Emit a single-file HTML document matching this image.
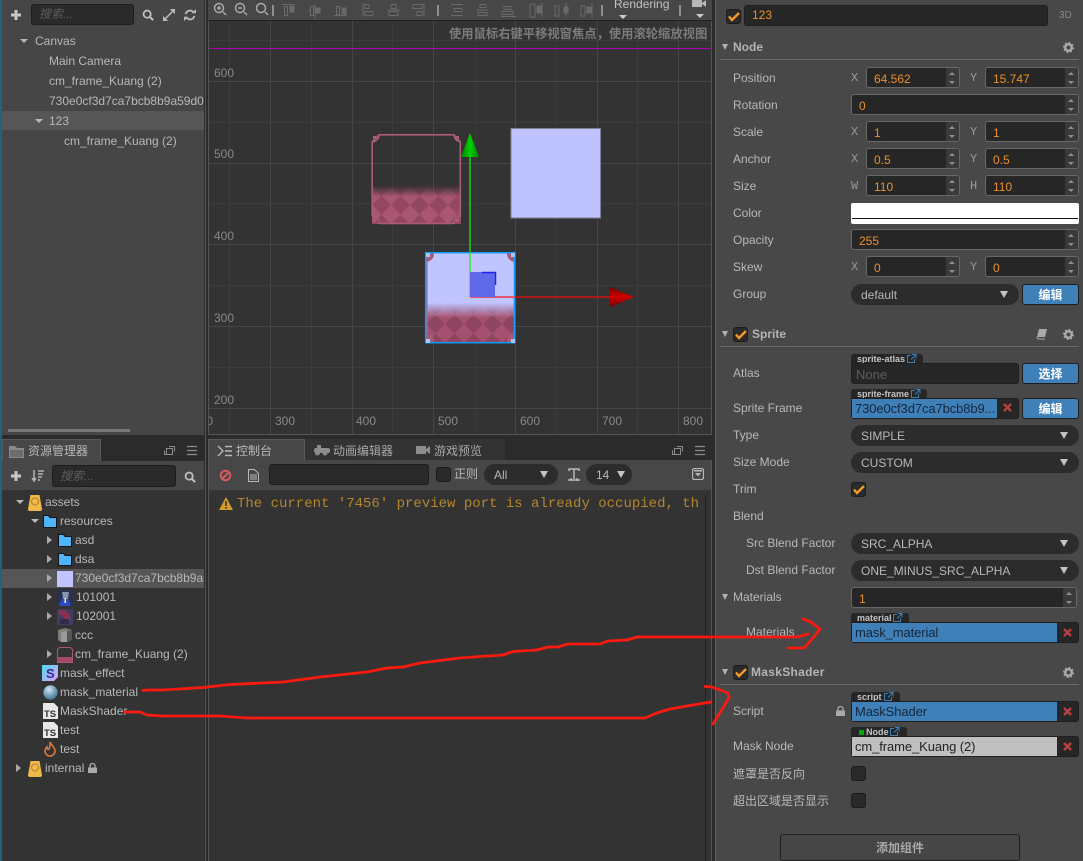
<!DOCTYPE html>
<html><head><meta charset="utf-8"><style>
html,body{margin:0;padding:0;background:#2b2b2b}
#r{position:relative;width:1083px;height:861px;overflow:hidden;background:#2b2b2b;font:12px/14px "Liberation Sans","Noto Sans CJK SC",sans-serif;color:#b8b8b8}
#r div,#r span.a,#r svg{position:absolute}
.t{position:absolute;white-space:nowrap}
.b{position:absolute}
.x{font:12px/14px "Liberation Mono",monospace;color:#999}
.n{background:#262626;border:1px solid #686868;border-radius:3px;height:19px;box-sizing:content-box;color:#e8902c;font-size:12px;line-height:23px;text-indent:7px}
.n i{position:absolute;right:0;top:0;bottom:0;width:13px;background:#3a3a3a;border-radius:0 2px 2px 0}
.n i:before,.n i:after{content:"";position:absolute;left:3px;border-left:3.5px solid transparent;border-right:3.5px solid transparent}
.n i:before{top:4px;border-bottom:3px solid #8f8f8f}
.n i:after{bottom:3px;border-top:3px solid #8f8f8f}
.s{background:#2c2c2c;border-radius:11px;height:21px;line-height:22px;text-indent:10px;color:#b8b8b8}
.s i{position:absolute;right:11px;top:7px;border-left:4px solid transparent;border-right:4px solid transparent;border-top:7px solid #c4c4c4}
.btn{background:#3f80b9;border:1px solid #1e1e1e;border-radius:3px;color:#fff;font-weight:bold;text-align:center;line-height:20px;height:19px;width:55px;left:1022px}
.o{background:#262626;border:1px solid #1f1f1f;border-radius:3px;height:19px;line-height:21px;text-indent:4px;box-sizing:content-box}
.tag{background:#262626;border-radius:3px 3px 0 0;height:10px;font:bold 9px/10px "Liberation Sans",sans-serif;color:#c4c4c4;text-indent:6px}
.cb{width:13px;height:13px;background:#2a2a2a;border:1px solid #1c1c1c;border-radius:3px}
.h{font-weight:bold;color:#b4b4b4}
.sep{height:1px;background:#6a6a6a;left:720px;width:359px}
.tri{width:0;height:0;border-left:3.5px solid transparent;border-right:3.5px solid transparent;border-top:6px solid #b0b0b0}
.tt{width:0;height:0;border-left:4px solid transparent;border-right:4px solid transparent;border-top:4px solid #b8b8b8}
.rt{width:0;height:0;border-top:4px solid transparent;border-bottom:4px solid transparent;border-left:5px solid #aaa}
.lb{font-size:12px;color:#888}
.bl{background:#3f80b9;color:#16263a;font-size:13px;height:19px;line-height:20px;text-indent:3px;letter-spacing:-.1px;white-space:nowrap;overflow:hidden}
</style></head><body><div id="r">

<!-- panels -->
<div style="left:0;top:0;width:2px;height:861px;background:#25607f"></div>
<div style="left:2px;top:0;width:202px;height:435px;background:#464646"></div>
<div style="left:2px;top:111px;width:202px;height:19px;background:#565656"></div>
<div style="left:8px;top:429px;width:122px;height:3px;background:#777"></div>
<div style="left:205px;top:0;width:1px;height:861px;background:#555"></div>
<div style="left:208px;top:0;width:504px;height:20px;background:#474747"></div>
<div style="left:209px;top:20px;width:503px;height:1px;background:#222"></div>

<!-- tree -->
<svg style="left:11px;top:10px" width="10" height="10"><path d="M3.500 0h3v3.500H10v3H6.500V10h-3V6.500H0v-3h3.500z" fill="#c8c8c8"/></svg>
<div class="b" style="left:31px;top:4px;width:101px;height:19px;background:#2a2a2a;border:1px solid #1e1e1e;border-radius:3px"></div>
<div class="t" style="left:39px;top:7px;color:#5c5c5c;font-style:italic">搜索...</div>
<svg style="left:142px;top:9px" width="12" height="12" viewBox="0 0 14 14"><circle cx="6" cy="6" r="4.200" fill="none" stroke="#c0c0c0" stroke-width="2"/><path d="M9 9l4 4" stroke="#c0c0c0" stroke-width="2.400"/></svg>
<svg style="left:163px;top:9px" width="12" height="12" viewBox="0 0 14 14"><path d="M2 12l10-10" stroke="#b8b8b8" stroke-width="1.800"/><path d="M8 0h6v6zM0 8v6h6z" fill="#b8b8b8"/></svg>
<svg style="left:184px;top:9px" width="12" height="12" viewBox="0 0 14 14"><path d="M2 6a5 5 0 0 1 9-2M12 8a5 5 0 0 1-9 2" fill="none" stroke="#b8b8b8" stroke-width="2.200"/><path d="M9 5h5V0zM5 9H0v5z" fill="#b8b8b8"/></svg>
<div class="b tt" style="left:20px;top:39px"></div>
<div class="t" style="left:35px;top:34px">Canvas</div>
<div class="t" style="left:49px;top:54px">Main Camera</div>
<div class="t" style="left:49px;top:74px">cm_frame_Kuang (2)</div>
<div class="t" style="left:49px;top:94px;width:155px;overflow:hidden">730e0cf3d7ca7bcb8b9a59d0</div>
<div class="b tt" style="left:35px;top:119px"></div>
<div class="t" style="left:49px;top:114px">123</div>
<div class="t" style="left:64px;top:134px">cm_frame_Kuang (2)</div>

<!-- scene -->
<svg style="left:0;top:0" width="1083" height="861">
<defs>
<pattern id="p" width="19" height="19" patternUnits="userSpaceOnUse" x="372" y="186">
<rect width="19" height="19" fill="#a04d6a"/><path d="M0 0L9.500 9.500 19 0zM0 19L9.500 9.500 19 19z" fill="#934762"/><path d="M0 0L9.500 9.500 0 19zM19 0L9.500 9.500 19 19z" fill="#aa5572"/>
</pattern>
<pattern id="p2" width="19" height="19" patternUnits="userSpaceOnUse" x="426" y="305">
<rect width="19" height="19" fill="#9c4a66"/><path d="M0 0L9.500 9.500 19 0zM0 19L9.500 9.500 19 19z" fill="#8f4460"/><path d="M0 0L9.500 9.500 0 19zM19 0L9.500 9.500 19 19z" fill="#a5506e"/>
</pattern>
<linearGradient id="g1" x1="0" y1="0" x2="0" y2="1"><stop offset="0" stop-color="#fff" stop-opacity="0"/><stop offset=".3" stop-color="#fff" stop-opacity="1"/><stop offset="1" stop-color="#fff"/></linearGradient>
<mask id="m1" maskUnits="userSpaceOnUse" x="371" y="185" width="91" height="40"><rect x="371" y="185" width="91" height="40" fill="url(#g1)"/></mask>
<linearGradient id="g2" x1="0" y1="0" x2="0" y2="1"><stop offset="0" stop-color="#fff" stop-opacity="0"/><stop offset=".38" stop-color="#fff" stop-opacity="1"/><stop offset="1" stop-color="#fff"/></linearGradient>
<mask id="m2" maskUnits="userSpaceOnUse" x="426" y="303" width="89" height="39"><rect x="426" y="303" width="89" height="39" fill="url(#g2)"/></mask>
<linearGradient id="ga" x1="0" y1="0" x2="0" y2="1"><stop offset="0" stop-color="#700000"/><stop offset=".5" stop-color="#d00000"/><stop offset="1" stop-color="#700000"/></linearGradient>
<linearGradient id="gb" x1="0" y1="0" x2="1" y2="0"><stop offset="0" stop-color="#008000"/><stop offset=".5" stop-color="#00d000"/><stop offset="1" stop-color="#008000"/></linearGradient>
</defs>
<rect x="209" y="21" width="503" height="414" fill="#333"/>
<path d="M229.500 21V434M311.500 21V434M392.500 21V434M475.500 21V434M556.500 21V434M637.500 21V434M209 40.500H712M209 122.500H712M209 203.500H712M209 285.500H712M209 367.500H712" stroke="#3c3c3c"/>
<path d="M270.500 21V434M352.500 21V434M433.500 21V434M515.500 21V434M597.500 21V434M678.500 21V434M209 81.500H712M209 163.500H712M209 244.500H712M209 326.500H712M209 408.500H712" stroke="#464646"/>
<path d="M208.500 21V434.500H711.500V21" fill="none" stroke="#555"/>
<rect x="209" y="48" width="503" height="1" fill="#b000b0"/>
<!-- upper sprite -->
<rect x="372" y="185" width="89" height="39" fill="url(#p)" mask="url(#m1)"/>
<path d="M379 134.800H454L460.300 142V216M454 223.500H379M372.200 216V142L379 134.800" fill="none" stroke="#ab5c77" stroke-width="1.600"/>
<path d="M372 142q7-1 7-8M454 134q0 7 7 8M372 216q7 0 7 8M454 224q0-7 7-8" fill="none" stroke="#ab5c77" stroke-width="1.500"/>
<rect x="373" y="136" width="3" height="3" fill="#ab5c77"/><rect x="456" y="136" width="3" height="3" fill="#ab5c77"/><rect x="373" y="219" width="3" height="3" fill="#ab5c77"/><rect x="456" y="219" width="3" height="3" fill="#ab5c77"/>
<!-- plain sprite -->
<rect x="511" y="128.500" width="89.500" height="89.500" fill="#bec3ff" stroke="#7f8199"/>
<!-- selected sprite -->
<rect x="426" y="253" width="89" height="89" fill="#c0c4ff"/>
<rect x="426" y="303" width="89" height="39" fill="url(#p2)" mask="url(#m2)"/>
<path d="M426 253h8q0 8-8 9zM515 253h-8q0 8 8 9zM426 342h8q0-8-8-9zM515 342h-8q0-8 8-9z" fill="#a85a78"/>
<path d="M427 262V333M514.300 262V333" stroke="#b06a86" stroke-width="1.200"/>
<rect x="425.700" y="252.700" width="89" height="90" fill="none" stroke="#0e9cff" stroke-width="1.500"/>
<rect x="426" y="339" width="4" height="4" fill="#9fc8f5"/><rect x="511" y="339" width="4" height="4" fill="#9fc8f5"/><rect x="511" y="253" width="4" height="4" fill="#9fc8f5"/><rect x="426" y="253" width="4" height="4" fill="#9fc8f5"/>
<!-- gizmo -->
<rect x="469" y="155" width="2" height="98" fill="#22a822"/>
<rect x="469" y="253" width="2" height="44" fill="#60e060"/>
<path d="M470 133L479 157H461z" fill="url(#gb)"/>
<rect x="470" y="296" width="45" height="2" fill="#e4566e"/>
<rect x="515" y="296" width="96" height="2" fill="#a81c1c"/>
<path d="M610 287L634 297 610 307z" fill="url(#ga)"/>
<rect x="470" y="272" width="25" height="25" fill="#5f68e8"/>
<path d="M482 272.500H495.500V285" fill="none" stroke="#2222ee" stroke-width="1.500"/>
</svg>

<div class="t lb" style="left:214px;top:66px">600</div>
<div class="t lb" style="left:214px;top:147px">500</div>
<div class="t lb" style="left:214px;top:229px">400</div>
<div class="t lb" style="left:214px;top:311px">300</div>
<div class="t lb" style="left:214px;top:393px">200</div>
<div class="t lb" style="left:209px;top:414px;width:4px;overflow:hidden;direction:rtl">0</div>
<div class="t lb" style="left:275px;top:414px">300</div>
<div class="t lb" style="left:356px;top:414px">400</div>
<div class="t lb" style="left:438px;top:414px">500</div>
<div class="t lb" style="left:520px;top:414px">600</div>
<div class="t lb" style="left:602px;top:414px">700</div>
<div class="t lb" style="left:683px;top:414px">800</div>
<div class="t" style="left:449px;top:26px;font:bold 12.300px/14px 'Noto Sans CJK SC',sans-serif;color:#7c7c7c">使用鼠标右键平移视窗焦点，使用滚轮缩放视图</div>

<!-- scene toolbar -->
<svg style="left:208px;top:0" width="504" height="20" fill="none" stroke="#a8a8a8" stroke-width="1.500">
<circle cx="11" cy="8" r="4.500"/><path d="M15 12l3 3M9 8h4M11 6v4"/>
<circle cx="32" cy="8" r="4.500"/><path d="M36 12l3 3M30 8h4"/>
<circle cx="53" cy="8" r="4.500"/><path d="M57 12l3 3"/>
<path d="M65 5v11" stroke="#aaa"/>
<g stroke="#6a6a6a" stroke-width="1">
<path d="M74 4.500h13M76.500 6.500h3v9h-3z"/><rect x="82" y="6" width="4" height="6" fill="#6a6a6a"/>
<path d="M101 10.500h1M102.500 6.500h3v9h-3z"/><rect x="108" y="8" width="4" height="5" fill="#6a6a6a"/><path d="M107 4v14"/>
<path d="M126 15.500h13M128.500 6.500h3v8h-3z"/><rect x="134" y="8" width="4" height="6" fill="#6a6a6a"/>
<path d="M155 3v14M157 4.500h4v4h-4zM157 11.500h8v4h-8z"/>
<path d="M179 10h13M183 4.500h5v4h-5zM181 11.500h9v4h-9z"/>
<path d="M216 3v14M205 4.500h9v4h-9zM209 11.500h5v4h-5z"/>
<path d="M243 4.500h12M243 15.500h12M246 8.500h8v3h-8z"/>
<path d="M268 10h12M272 4.500h6v3h-6zM270 12.500h9v3h-9z"/>
<path d="M293 16.500h15M296 6.500h7v3h-7zM294 11.500h11v3h-11z"/>
<path d="M322 4h5v13h-5zM334 3v14"/><rect x="329" y="6" width="4" height="7" fill="#6a6a6a"/>
<path d="M347 6h4v10h-4zM358 3v14"/><rect x="356" y="7" width="4" height="6" fill="#6a6a6a"/>
<path d="M373 6h4v10h-4zM384 3v14"/><rect x="379" y="7" width="4" height="6" fill="#6a6a6a"/>
</g>
<path d="M230 5v11M394 5v11M472 5v11"/>
</svg>
<div class="t" style="left:614px;top:-3px;color:#c4c4c4">Rendering</div>
<div class="b tt" style="left:619px;top:15px;border-top-color:#ccc"></div>
<svg style="left:692px;top:0" width="16" height="10"><path d="M0 0h10v7H0zM10 3l4-3v7l-4-3z" fill="#b8b8b8"/></svg>
<div class="b tt" style="left:696px;top:14px;border-top-color:#ccc"></div>

<!-- assets panel -->
<div style="left:2px;top:439px;width:99px;height:22px;background:#474747;border:1px solid #5a5a5a;border-bottom:0;box-sizing:border-box"></div>
<div style="left:2px;top:461px;width:202px;height:29px;background:#474747"></div>
<div style="left:2px;top:490px;width:202px;height:371px;background:#333"></div>
<div style="left:2px;top:569px;width:202px;height:19px;background:#565656"></div>
<svg style="left:9px;top:444px" width="16" height="14"><path d="M0 2h6l2 2h7v10H0z" fill="#8a8a8a"/><path d="M1 6h13v7H1z" fill="#6d6d6d"/></svg>
<div class="t" style="left:28px;top:444px;color:#b8b8b8">资源管理器</div>
<svg style="left:163px;top:445px" width="36" height="12" fill="none" stroke="#8c8c8c"><path d="M3.500 3.500h6v6h-6zM1.500 5.500v4h2M6 1.500h5.500v5"/><path d="M24 1.500h10M24 5.500h10M24 9.500h10" stroke-width="1.300"/></svg>
<svg style="left:11px;top:471px" width="10" height="10"><path d="M3.500 0h3v3.500H10v3H6.500V10h-3V6.500H0v-3h3.500z" fill="#c8c8c8"/></svg>
<svg style="left:31px;top:469px" width="14" height="14" fill="none" stroke="#b4b4b4" stroke-width="1.500"><path d="M3 1v11M1 9l2 3 2-3M7 2h6M7 5h5M7 8h4M7 11h2"/></svg>
<div class="b" style="left:52px;top:465px;width:122px;height:20px;background:#2a2a2a;border:1px solid #1e1e1e;border-radius:3px"></div>
<div class="t" style="left:60px;top:469px;color:#5c5c5c;font-style:italic">搜索...</div>
<svg style="left:184px;top:471px" width="12" height="12" viewBox="0 0 14 14"><circle cx="6" cy="6" r="4.200" fill="none" stroke="#c0c0c0" stroke-width="2"/><path d="M9 9l4 4" stroke="#c0c0c0" stroke-width="2.400"/></svg>

<div class="b tt" style="left:16px;top:500px"></div>
<svg style="left:28px;top:495px" width="14" height="16"><path d="M2.500 0h9l2.500 14q0 2-2 2H2q-2 0-2-2z" fill="#f2b84a"/><circle cx="7" cy="6.500" r="3.500" fill="none" stroke="#b88a30" stroke-width="1.300"/></svg>
<div class="t" style="left:45px;top:495px">assets</div>
<div class="b tt" style="left:31px;top:519px"></div>
<svg style="left:43px;top:515px" width="14" height="13"><path d="M.500 .500h5l1.500 2h6.500v10H.500z" fill="#4db4ff" stroke="#111"/></svg>
<div class="t" style="left:60px;top:514px">resources</div>
<div class="b rt" style="left:47px;top:536px"></div>
<svg style="left:58px;top:534px" width="14" height="13"><path d="M.500 .500h5l1.500 2h6.500v10H.500z" fill="#4db4ff" stroke="#111"/></svg>
<div class="t" style="left:75px;top:533px">asd</div>
<div class="b rt" style="left:47px;top:555px"></div>
<svg style="left:58px;top:553px" width="14" height="13"><path d="M.500 .500h5l1.500 2h6.500v10H.500z" fill="#4db4ff" stroke="#111"/></svg>
<div class="t" style="left:75px;top:552px">dsa</div>
<div class="b rt" style="left:47px;top:574px"></div>
<div class="b" style="left:57px;top:571px;width:16px;height:16px;background:#c0c4ff"></div>
<div class="t" style="left:75px;top:571px;width:129px;overflow:hidden">730e0cf3d7ca7bcb8b9a59d0</div>
<div class="b rt" style="left:47px;top:593px"></div>
<svg style="left:57px;top:590px" width="16" height="16"><rect width="16" height="16" fill="#2a3050"/><path d="M2 16l3-8 3 4 3-4 3 8z" fill="#2a4cc0"/><path d="M5 2h7l-1 7H6z" fill="#8894a8"/><rect x="7.500" y="8" width="1.500" height="5" fill="#eee"/></svg>
<div class="t" style="left:76px;top:590px">101001</div>
<div class="b rt" style="left:47px;top:612px"></div>
<svg style="left:57px;top:609px" width="16" height="16"><rect width="16" height="16" fill="#423c62"/><path d="M2 1h6l5 5v6H9L5 6H2z" fill="#8a3050"/><path d="M3 10h9v5H3z" fill="#2e2e48"/></svg>
<div class="t" style="left:76px;top:609px">102001</div>
<svg style="left:58px;top:628px" width="14" height="14"><path d="M0 2l7-2 7 2v10l-5 2H3l-3-2z" fill="#7d7d7d"/><path d="M3 4l6-1v11H3z" fill="#9a9a9a"/><path d="M9 3l5-1v10l-5 2z" fill="#555"/></svg>
<div class="t" style="left:75px;top:628px">ccc</div>
<div class="b rt" style="left:47px;top:650px"></div>
<svg style="left:57px;top:647px" width="16" height="16"><path d="M2.500 .500h11l2 2v13H.500v-13z" fill="#333" stroke="#a85872"/><rect x="1" y="10" width="14" height="5" fill="#a04c69"/></svg>
<div class="t" style="left:75px;top:647px">cm_frame_Kuang (2)</div>
<svg style="left:42px;top:665px" width="16" height="16"><defs><linearGradient id="sg" x1="0" y1="0" x2="1" y2="1"><stop offset="0" stop-color="#4fd8f0"/><stop offset="1" stop-color="#e0a0ff"/></linearGradient></defs><path d="M0 0h16v12l-4 4H0z" fill="url(#sg)"/><text x="4" y="13" font-family="Liberation Sans" font-weight="bold" font-size="13" fill="#3a2a90">S</text></svg>
<div class="t" style="left:60px;top:666px">mask_effect</div>
<svg style="left:43px;top:685px" width="15" height="15"><defs><radialGradient id="bg" cx=".4" cy=".3" r=".75"><stop offset="0" stop-color="#d4e6f2"/><stop offset=".5" stop-color="#7fa8c2"/><stop offset="1" stop-color="#3d6a88"/></radialGradient></defs><circle cx="7.500" cy="7.500" r="7.200" fill="url(#bg)"/></svg>
<div class="t" style="left:60px;top:685px">mask_material</div>
<svg style="left:43px;top:703px" width="15" height="16"><path d="M0 0h11l4 4v12H0z" fill="#e8e8e8"/><text x="1" y="14" font-family="Liberation Sans" font-weight="bold" font-size="9.500" fill="#333">TS</text></svg>
<div class="t" style="left:60px;top:704px">MaskShader</div>
<svg style="left:43px;top:722px" width="15" height="16"><path d="M0 0h11l4 4v12H0z" fill="#e8e8e8"/><text x="1" y="14" font-family="Liberation Sans" font-weight="bold" font-size="9.500" fill="#333">TS</text></svg>
<div class="t" style="left:60px;top:723px">test</div>
<svg style="left:43px;top:741px" width="14" height="16"><path d="M7 1c1 3 5 5 5 9a5 5 0 0 1-10 0c0-2 1-3 2-4 0 2 1 3 2 2s1-4 1-7z" fill="none" stroke="#d97a3a" stroke-width="1.600"/></svg>
<div class="t" style="left:60px;top:742px">test</div>
<div class="b rt" style="left:16px;top:764px"></div>
<svg style="left:28px;top:761px" width="14" height="16"><path d="M2.500 0h9l2.500 14q0 2-2 2H2q-2 0-2-2z" fill="#f2b84a"/><circle cx="7" cy="6.500" r="3.500" fill="none" stroke="#b88a30" stroke-width="1.300"/></svg>
<div class="t" style="left:45px;top:761px">internal</div>
<svg style="left:88px;top:763px" width="9" height="10"><path d="M2 5V3a2.500 2.500 0 0 1 5 0v2" fill="none" stroke="#aaa" stroke-width="1.300"/><rect y="4.500" width="9" height="5.500" fill="#aaa"/></svg>

<!-- console -->
<div style="left:208px;top:439px;width:97px;height:22px;background:#474747;border:1px solid #5a5a5a;border-bottom:0;box-sizing:border-box"></div>
<div style="left:305px;top:439px;width:200px;height:21px;background:#333"></div>
<div style="left:208px;top:460px;width:504px;height:30px;background:#474747"></div>
<div style="left:208px;top:490px;width:504px;height:371px;background:#333"></div>
<div style="left:205px;top:0;width:1px;height:861px;background:#555"></div>
<div style="left:208px;top:460px;width:1px;height:401px;background:#555"></div>
<div style="left:711px;top:460px;width:1px;height:401px;background:#555"></div>
<div style="left:705px;top:495px;width:1px;height:366px;background:#222"></div>
<svg style="left:217px;top:445px" width="16" height="12" fill="none" stroke="#b8b8b8" stroke-width="1.400"><path d="M1 1l5 5-5 5M8 1.500h7M8 6h7M8 10.500h7"/></svg>
<div class="t" style="left:236px;top:444px">控制台</div>
<svg style="left:314px;top:444px" width="16" height="12"><rect x="0" y="4" width="16" height="5" rx="2" fill="#8c8c8c"/><circle cx="3.500" cy="9" r="2.500" fill="#8c8c8c"/><circle cx="11" cy="9" r="2.500" fill="#8c8c8c"/><rect x="3" y="1" width="4" height="5" fill="#8c8c8c"/></svg>
<div class="t" style="left:333px;top:444px;color:#a8a8a8">动画编辑器</div>
<svg style="left:416px;top:445px" width="14" height="10"><path d="M0 1h10v8H0zM10 4l4-3v8l-4-3z" fill="#8c8c8c"/></svg>
<div class="t" style="left:434px;top:444px;color:#a8a8a8">游戏预览</div>
<svg style="left:671px;top:445px" width="36" height="12" fill="none" stroke="#8c8c8c"><path d="M3.500 3.500h6v6h-6zM1.500 5.500v4h2M6 1.500h5.500v5"/><path d="M24 1.500h10M24 5.500h10M24 9.500h10" stroke-width="1.300"/></svg>
<svg style="left:219px;top:469px" width="13" height="13" fill="none" stroke="#d9575e" stroke-width="2"><circle cx="6.500" cy="6.500" r="4.800"/><path d="M3 10l7-7"/></svg>
<svg style="left:248px;top:469px" width="11" height="13" fill="none" stroke="#b8b8b8"><path d="M.500 .500h6l4 4v8H.500zM2 6h7M2 8h7M2 10h7"/></svg>
<div class="b" style="left:269px;top:464px;width:158px;height:19px;background:#2a2a2a;border:1px solid #1e1e1e;border-radius:3px"></div>
<div class="cb" style="left:436px;top:467px"></div>
<div class="t" style="left:454px;top:467px;color:#b8b8b8">正则</div>
<div class="b s" style="left:484px;top:464px;width:74px;color:#b8b8b8">All<i style="right:10px"></i></div>
<svg style="left:568px;top:468px" width="12" height="14" fill="none" stroke="#b8b8b8" stroke-width="1.500"><path d="M1 3V1h10v2M6 1v10M0 12h12M3 10v3M9 10v3"/></svg>
<div class="b s" style="left:586px;top:464px;width:46px">14<i style="right:7px"></i></div>
<svg style="left:692px;top:468px" width="12" height="12"><rect x=".500" y=".500" width="11" height="11" rx="2" fill="none" stroke="#b8b8b8" stroke-width="1.300"/><rect x="2" y="2" width="8" height="1.500" fill="#b8b8b8"/><path d="M3 5h6L6 8.500z" fill="#b8b8b8"/></svg>
<svg style="left:219px;top:497px" width="14" height="13"><path d="M7 0l7 13H0z" fill="#d49a2a"/><rect x="6.200" y="4" width="1.600" height="5" fill="#333"/><rect x="6.200" y="10" width="1.600" height="1.600" fill="#333"/></svg>
<div class="t" style="left:237px;top:497px;font:14px/14px 'Liberation Mono',monospace;color:#b5852e">The current '7456' preview port is already occupied, th</div>

<!-- inspector -->
<div style="left:712px;top:0;width:3px;height:861px;background:#2b2b2b"></div>
<div style="left:715px;top:0;width:1px;height:861px;background:#636363"></div>
<div style="left:716px;top:0;width:367px;height:861px;background:#484848"></div>

<div class="cb" style="left:726px;top:9px"></div>
<svg style="left:728px;top:11px" width="12" height="11"><path d="M1 5.500l3 3.500 7-7" fill="none" stroke="#f7992c" stroke-width="2.400"/></svg>
<div class="b o" style="left:744px;top:5px;width:302px;color:#e8902c;text-indent:7px;line-height:19px">123</div>
<div class="t" style="left:1059px;top:9px;font-size:10px;color:#888">3D</div>

<div class="b tri" style="left:722px;top:44px"></div>
<div class="t h" style="left:733px;top:40px">Node</div>
<svg style="left:1063px;top:42px" width="11" height="11" viewBox="0 0 12 12"><circle cx="6" cy="6" r="3.500" fill="none" stroke="#aaa" stroke-width="2.600"/><circle cx="6" cy="6" r="5" fill="none" stroke="#aaa" stroke-width="2" stroke-dasharray="2 1.900"/></svg>
<div class="b sep" style="top:59px"></div>

<div class="t" style="left:733px;top:71px">Position</div>
<div class="t x" style="left:851px;top:71px">X</div><div class="b n" style="left:866px;top:67px;width:92px">64.562<i></i></div>
<div class="t x" style="left:970px;top:71px">Y</div><div class="b n" style="left:985px;top:67px;width:92px">15.747<i></i></div>
<div class="t" style="left:733px;top:98px">Rotation</div>
<div class="b n" style="left:851px;top:94px;width:226px">0<i></i></div>
<div class="t" style="left:733px;top:125px">Scale</div>
<div class="t x" style="left:851px;top:125px">X</div><div class="b n" style="left:866px;top:121px;width:92px">1<i></i></div>
<div class="t x" style="left:970px;top:125px">Y</div><div class="b n" style="left:985px;top:121px;width:92px">1<i></i></div>
<div class="t" style="left:733px;top:152px">Anchor</div>
<div class="t x" style="left:851px;top:152px">X</div><div class="b n" style="left:866px;top:148px;width:92px">0.5<i></i></div>
<div class="t x" style="left:970px;top:152px">Y</div><div class="b n" style="left:985px;top:148px;width:92px">0.5<i></i></div>
<div class="t" style="left:733px;top:179px">Size</div>
<div class="t x" style="left:851px;top:179px">W</div><div class="b n" style="left:866px;top:175px;width:92px">110<i></i></div>
<div class="t x" style="left:970px;top:179px">H</div><div class="b n" style="left:985px;top:175px;width:92px">110<i></i></div>
<div class="t" style="left:733px;top:206px">Color</div>
<div class="b" style="left:851px;top:203px;width:228px;height:21px;background:#fff;border-radius:2px"></div>
<div class="b" style="left:852px;top:218px;width:226px;height:1px;background:#111"></div>
<div class="t" style="left:733px;top:233px">Opacity</div>
<div class="b n" style="left:851px;top:229px;width:226px">255<i></i></div>
<div class="t" style="left:733px;top:260px">Skew</div>
<div class="t x" style="left:851px;top:260px">X</div><div class="b n" style="left:866px;top:256px;width:92px">0<i></i></div>
<div class="t x" style="left:970px;top:260px">Y</div><div class="b n" style="left:985px;top:256px;width:92px">0<i></i></div>
<div class="t" style="left:733px;top:287px">Group</div>
<div class="b s" style="left:851px;top:284px;width:168px">default<i></i></div>
<div class="b btn" style="top:284px">编辑</div>

<div class="b tri" style="left:722px;top:331px"></div>
<div class="cb" style="left:733px;top:327px"></div>
<svg style="left:735px;top:329px" width="12" height="11"><path d="M1 5.500l3 3.500 7-7" fill="none" stroke="#f7992c" stroke-width="2.400"/></svg>
<div class="t h" style="left:752px;top:327px">Sprite</div>
<svg style="left:1036px;top:328px" width="12" height="12"><path d="M3 1h8L9 9H1z" fill="#aaa"/><path d="M1 9q0 2 2 2h6" fill="none" stroke="#aaa"/></svg>
<svg style="left:1063px;top:329px" width="11" height="11" viewBox="0 0 12 12"><circle cx="6" cy="6" r="3.500" fill="none" stroke="#aaa" stroke-width="2.600"/><circle cx="6" cy="6" r="5" fill="none" stroke="#aaa" stroke-width="2" stroke-dasharray="2 1.900"/></svg>
<div class="b sep" style="top:346px"></div>

<div class="t" style="left:733px;top:366px">Atlas</div>
<div class="b tag" style="left:851px;top:354px;width:72px">sprite-atlas</div>
<svg style="left:907px;top:354px" width="10" height="9" fill="none" stroke="#3f80b9"><path d="M4 1.500H.500v7h7V5M5 .500h4v4M9 .500L4 5.500"/></svg>
<div class="b o" style="left:851px;top:363px;width:166px;color:#5f5f5f;font-size:13px">None</div>
<div class="b btn" style="top:363px">选择</div>

<div class="t" style="left:733px;top:401px">Sprite Frame</div>
<div class="b tag" style="left:851px;top:389px;width:76px">sprite-frame</div>
<svg style="left:911px;top:389px" width="10" height="9" fill="none" stroke="#3f80b9"><path d="M4 1.500H.500v7h7V5M5 .500h4v4M9 .500L4 5.500"/></svg>
<div class="b o" style="left:851px;top:398px;width:166px"></div>
<div class="b bl" style="left:852px;top:399px;width:145px">730e0cf3d7ca7bcb8b9...</div>
<svg style="left:1003px;top:403px" width="9" height="9"><path d="M1 1L8 8M8 1L1 8" stroke="#b8403f" stroke-width="2.400"/></svg>
<div class="b btn" style="top:398px">编辑</div>

<div class="t" style="left:733px;top:428px">Type</div>
<div class="b s" style="left:851px;top:425px;width:228px">SIMPLE<i></i></div>
<div class="t" style="left:733px;top:455px">Size Mode</div>
<div class="b s" style="left:851px;top:452px;width:228px">CUSTOM<i></i></div>
<div class="t" style="left:733px;top:482px">Trim</div>
<div class="cb" style="left:851px;top:482px"></div>
<svg style="left:853px;top:484px" width="12" height="11"><path d="M1 5.500l3 3.500 7-7" fill="none" stroke="#f7992c" stroke-width="2.400"/></svg>
<div class="t" style="left:733px;top:509px">Blend</div>
<div class="t" style="left:746px;top:536px">Src Blend Factor</div>
<div class="b s" style="left:851px;top:533px;width:228px">SRC_ALPHA<i></i></div>
<div class="t" style="left:746px;top:563px">Dst Blend Factor</div>
<div class="b s" style="left:851px;top:560px;width:228px">ONE_MINUS_SRC_ALPHA<i></i></div>

<div class="b tri" style="left:722px;top:594px"></div>
<div class="t" style="left:733px;top:590px">Materials</div>
<div class="b n" style="left:851px;top:587px;width:224px">1<i></i></div>
<div class="t" style="left:746px;top:625px">Materials</div>
<div class="b tag" style="left:851px;top:613px;width:58px">material</div>
<svg style="left:893px;top:613px" width="10" height="9" fill="none" stroke="#3f80b9"><path d="M4 1.500H.500v7h7V5M5 .500h4v4M9 .500L4 5.500"/></svg>
<div class="b o" style="left:851px;top:622px;width:226px"></div>
<div class="b bl" style="left:852px;top:623px;width:205px">mask_material</div>
<svg style="left:1063px;top:628px" width="9" height="9"><path d="M1 1L8 8M8 1L1 8" stroke="#b8403f" stroke-width="2.400"/></svg>

<div class="b tri" style="left:722px;top:669px"></div>
<div class="cb" style="left:733px;top:665px"></div>
<svg style="left:735px;top:667px" width="12" height="11"><path d="M1 5.500l3 3.500 7-7" fill="none" stroke="#f7992c" stroke-width="2.400"/></svg>
<div class="t h" style="left:751px;top:665px;letter-spacing:.3px">MaskShader</div>
<svg style="left:1063px;top:667px" width="11" height="11" viewBox="0 0 12 12"><circle cx="6" cy="6" r="3.500" fill="none" stroke="#aaa" stroke-width="2.600"/><circle cx="6" cy="6" r="5" fill="none" stroke="#aaa" stroke-width="2" stroke-dasharray="2 1.900"/></svg>
<div class="b sep" style="top:684px"></div>

<div class="t" style="left:733px;top:704px">Script</div>
<svg style="left:836px;top:706px" width="9" height="10"><path d="M2 5V3a2.500 2.500 0 0 1 5 0v2" fill="none" stroke="#aaa" stroke-width="1.300"/><rect y="4.500" width="9" height="5.500" fill="#aaa"/></svg>
<div class="b tag" style="left:851px;top:692px;width:49px">script</div>
<svg style="left:884px;top:692px" width="10" height="9" fill="none" stroke="#3f80b9"><path d="M4 1.500H.500v7h7V5M5 .500h4v4M9 .500L4 5.500"/></svg>
<div class="b o" style="left:851px;top:701px;width:226px"></div>
<div class="b bl" style="left:852px;top:702px;width:205px">MaskShader</div>
<svg style="left:1063px;top:707px" width="9" height="9"><path d="M1 1L8 8M8 1L1 8" stroke="#b8403f" stroke-width="2.400"/></svg>

<div class="t" style="left:733px;top:739px">Mask Node</div>
<div class="b tag" style="left:851px;top:727px;width:56px;text-indent:15px">Node</div>
<div class="b" style="left:859px;top:730px;width:5px;height:5px;background:#0a0"></div>
<svg style="left:890px;top:727px" width="10" height="9" fill="none" stroke="#3f80b9"><path d="M4 1.500H.500v7h7V5M5 .500h4v4M9 .500L4 5.500"/></svg>
<div class="b o" style="left:851px;top:736px;width:226px"></div>
<div class="b bl" style="left:852px;top:737px;width:205px;background:#c0c0c0;color:#222">cm_frame_Kuang (2)</div>
<svg style="left:1063px;top:742px" width="9" height="9"><path d="M1 1L8 8M8 1L1 8" stroke="#b8403f" stroke-width="2.400"/></svg>

<div class="t" style="left:733px;top:767px">遮罩是否反向</div>
<div class="cb" style="left:851px;top:766px"></div>
<div class="t" style="left:733px;top:794px">超出区域是否显示</div>
<div class="cb" style="left:851px;top:793px"></div>
<div class="b" style="left:780px;top:834px;width:238px;height:25px;background:#464646;border:1px solid #1e1e1e;border-radius:3px;text-align:center;line-height:26px;font-weight:bold;color:#aaa">添加组件</div>

<!-- red annotations -->
<svg style="left:0;top:0" width="1083" height="861" fill="none" stroke="#fb1a10" stroke-width="2.800" stroke-linejoin="round" stroke-linecap="round">
<path d="M143 690.500L148 690 163 690 203 687.500 230 684.500 283 682 320 677 367 672 387 668 403 667 420 663 460 658 480 656.500 503 655 513 651.500 537 650 548 647 558 647 568 644 600 644 608 641 627 640 637 637 797 637 808 634"/>
<path d="M803 619L810 621.500 820 629 813 638 804 648 788 648"/>
<path d="M125 712L140 712 147 715 163 716 220 716 247 718 645 718 657 713 670 709 687 706 711 702"/>
<path d="M705 686.500L712 687 728 693 729 698 713 724"/>
</svg>
</div></body></html>
